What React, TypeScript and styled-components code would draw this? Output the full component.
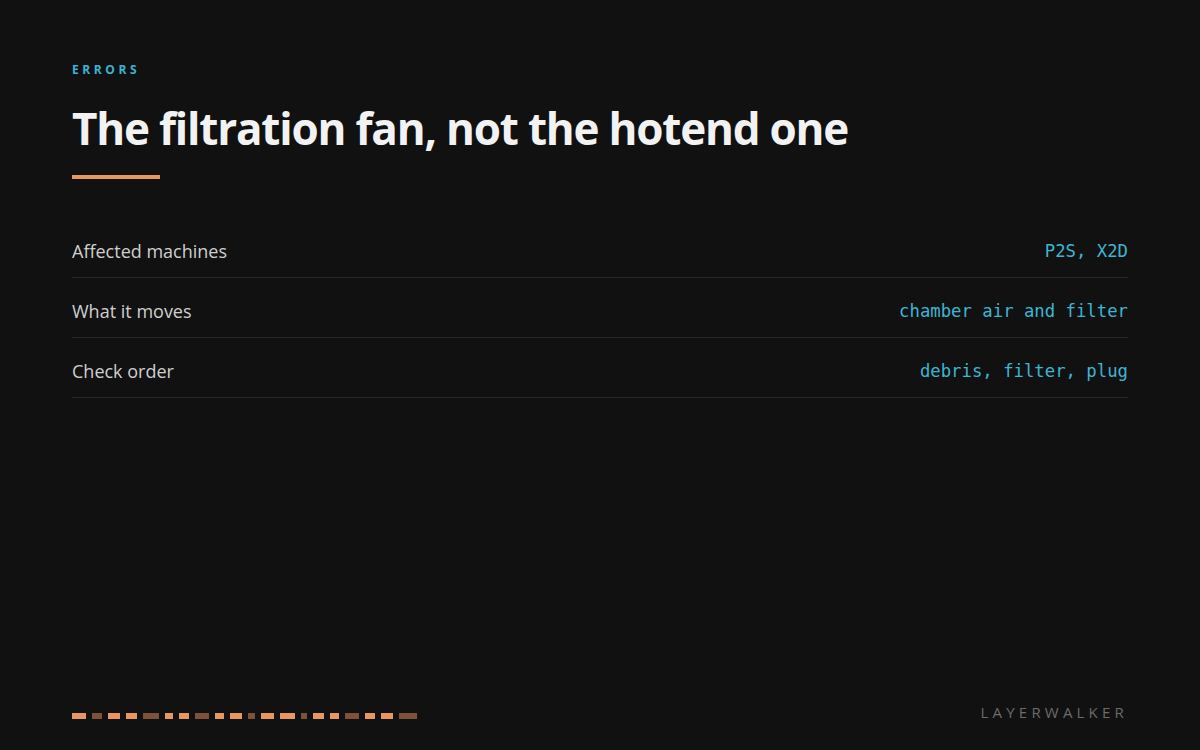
import React from "react";
import styled, { createGlobalStyle } from "styled-components";

const Global = createGlobalStyle`
  html, body { margin: 0; padding: 0; background: #111111; }
  body { font-family: "Open Sans", "Noto Sans", sans-serif; }
`;

const Page = styled.div`
  width: 1200px;
  height: 750px;
  box-sizing: border-box;
  padding: 62px 72px 31px 72px;
  display: flex;
  flex-direction: column;
  background: #111111;
`;

const Eyebrow = styled.div`
  font-family: "Open Sans", sans-serif;
  font-weight: 700;
  font-size: 12px;
  line-height: 16px;
  letter-spacing: 3.6px;
  color: #3ab4d4;
  text-transform: uppercase;
`;

const Title = styled.h1`
  margin: 22px 0 0 0;
  font-family: "Open Sans", sans-serif;
  font-weight: 700;
  font-size: 44px;
  line-height: 56px;
  letter-spacing: -1.2px;
  color: #f2f2f2;
`;

const Accent = styled.div`
  width: 88px;
  height: 4px;
  margin-top: 19px;
  background: #e8975f;
`;

const Table = styled.div`
  margin-top: 39px;
  display: flex;
  flex-direction: column;
`;

const Row = styled.div`
  height: 60px;
  box-sizing: border-box;
  padding-top: 7px;
  display: flex;
  align-items: center;
  justify-content: space-between;
  border-bottom: 1px solid #262626;
`;

const Label = styled.span`
  font-family: "Open Sans", sans-serif;
  font-size: 18px;
  color: #cfcfcf;
`;

const Value = styled.span`
  font-family: "DejaVu Sans Mono", "Liberation Mono", monospace;
  font-size: 17.3px;
  color: #3db5d2;
`;

const Footer = styled.div`
  margin-top: auto;
  display: flex;
  align-items: flex-end;
  justify-content: space-between;
`;

const Dashes = styled.div`
  display: flex;
  gap: 6px;
`;

const Dash = styled.span<{ $w: number; $dim: boolean }>`
  display: block;
  width: ${(p) => p.$w}px;
  height: 6px;
  background: ${(p) => (p.$dim ? "#7d5236" : "#e8975f")};
`;

const Brand = styled.div`
  font-family: "Open Sans", sans-serif;
  font-size: 15px;
  line-height: 15px;
  letter-spacing: 4.2px;
  margin-bottom: -1px;
  color: #6b6b6b;
`;

const rows = [
  ["Affected machines", "P2S, X2D"],
  ["What it moves", "chamber air and filter"],
  ["Check order", "debris, filter, plug"],
];

const dashWidths = [14, 10, 12, 11, 16, 8, 10, 14, 9, 12, 7, 13, 15, 6, 11, 9, 14, 10, 12, 18];

export default function App() {
  return (
    <>
      <Global />
      <Page>
        <Eyebrow>Errors</Eyebrow>
        <Title>The filtration fan, not the hotend one</Title>
        <Accent />
        <Table>
          {rows.map(([l, v]) => (
            <Row key={l}>
              <Label>{l}</Label>
              <Value>{v}</Value>
            </Row>
          ))}
        </Table>
        <Footer>
          <Dashes>
            {dashWidths.map((w, i) => (
              <Dash key={i} $w={w} $dim={i % 3 === 1} />
            ))}
          </Dashes>
          <Brand>LAYERWALKER</Brand>
        </Footer>
      </Page>
    </>
  );
}
